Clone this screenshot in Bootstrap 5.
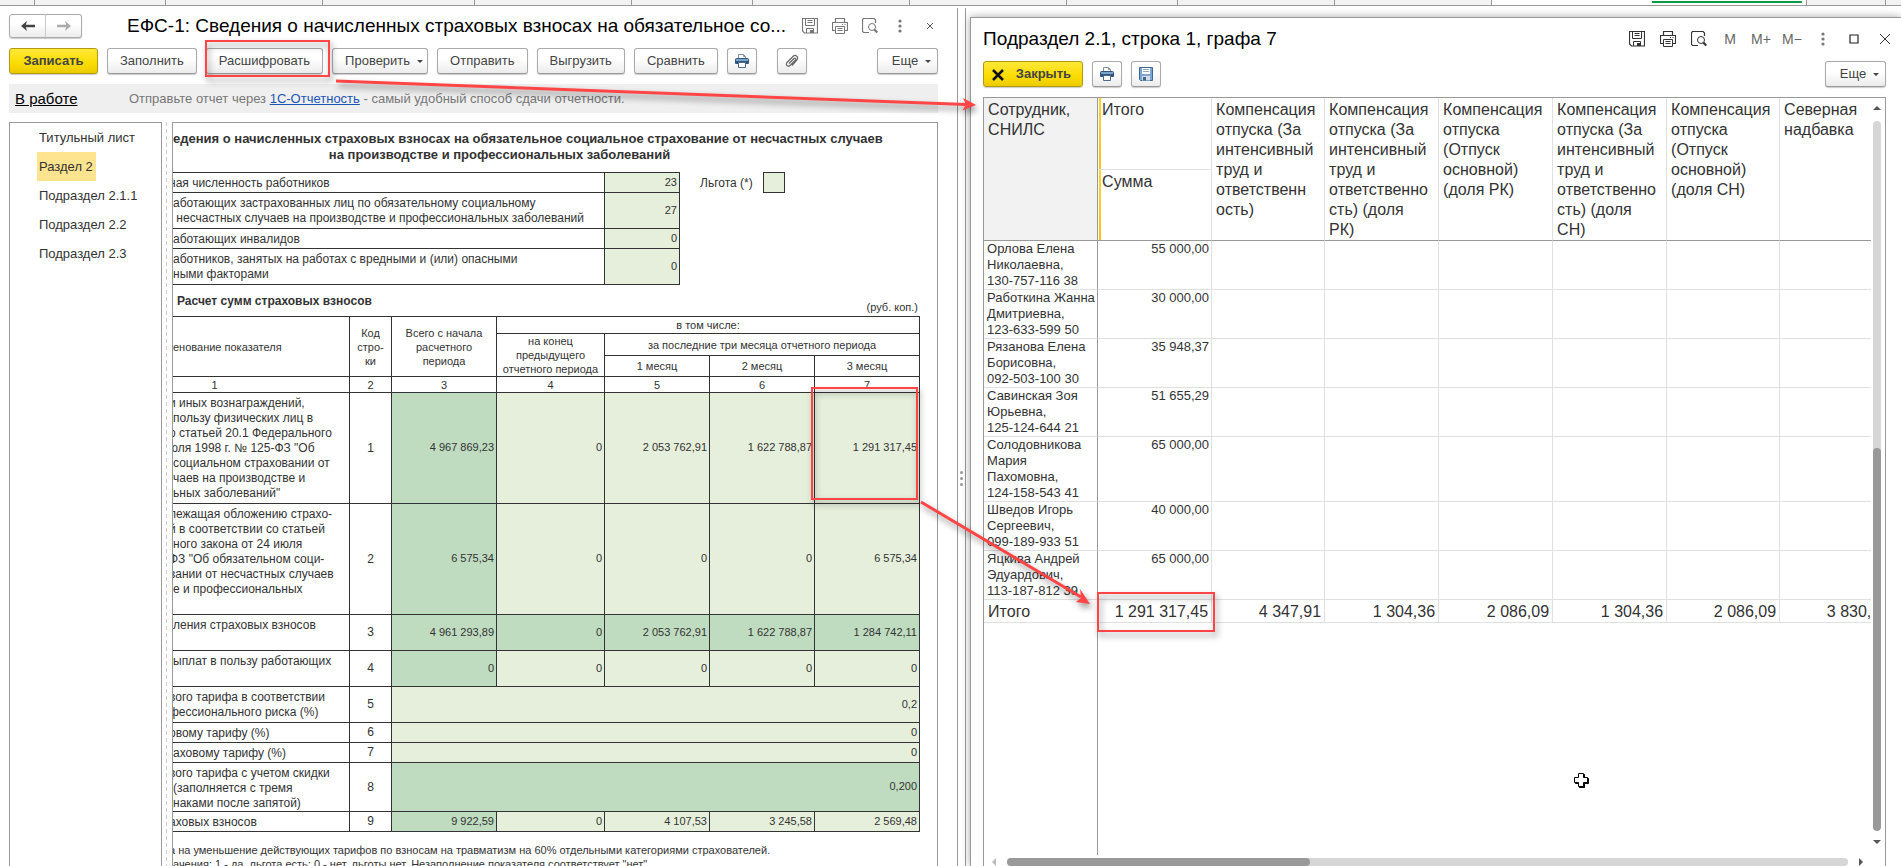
<!DOCTYPE html>
<html lang="ru">
<head>
<meta charset="utf-8">
<meta name="viewport" content="width=device-width, initial-scale=1">
<title>ЕФС-1</title>
<link rel="stylesheet" href="https://cdn.jsdelivr.net/npm/bootstrap@5.3.0/dist/css/bootstrap.min.css">
<style>
body{font-family:"Liberation Sans",Arial,sans-serif;font-size:13px;line-height:16px;color:#333;background:#fff}
.tabstrip{height:6px;border-bottom:1px solid #999;background:#f2f2f2}
.tabstrip>div{border-right:1px solid #999;min-width:0}
.tabstrip>.on{background:#fff;overflow:hidden}
.tabstrip>.on i{display:block;height:2px;background:#0a9f46;margin:1px 1% 0 51%}
.leftpane{flex:0 0 50.4%;padding:7px 20px 0 9px;min-width:0;position:relative}
.leftpane::after{content:"";position:absolute;right:0;top:2px;bottom:0;border-right:1px solid #999}
.splitter{flex:0 0 8px;margin-top:2px;border-right:1px solid #999;color:#999}
.splitter i{width:3px;height:3px;border-radius:50%;background:#999}
.popupwin{margin:11px 0 0 4px;border:1px solid #999;border-width:1px 0 0 1px;padding:8px 15px 0 12px;box-shadow:0 0 8px rgba(0,0,0,.35);background:#fff;min-width:0}
.wintitle{font-size:19px;line-height:26px;color:#000;margin:0;font-weight:400;white-space:nowrap}
.btn.tool{height:26px;min-width:84px;font-size:13px;line-height:16px;padding:4px 12px;color:#444;border:1px solid #aaa;border-bottom-color:#999;border-radius:3px;background:linear-gradient(#fff 40%,#ececec);box-shadow:0 1px 1px rgba(0,0,0,.2);white-space:nowrap}
.btn.tool.main{min-width:89px;font-weight:700;background:linear-gradient(#ffe838,#fadc00 60%,#eccb00);border-color:#b29a10}
.btn.tool.shut{min-width:100px;padding-left:7px;padding-right:10px}
.btn.tool.sq{width:30px;min-width:0;padding:0;display:flex;align-items:center;justify-content:center}
.btn.tool.more{width:61px;min-width:0}
.btn.tool .arr{display:inline-block;border:3px solid transparent;border-top-color:#444;border-bottom:0;margin-left:7px;vertical-align:2px}
.navpair .btn{width:37px;height:24px;padding:0;display:flex;align-items:center;justify-content:center;border:1px solid #aaa;background:linear-gradient(#fff 40%,#ececec);box-shadow:0 1px 1px rgba(0,0,0,.2);border-radius:3px}
.navpair .btn+.btn{border-left-color:#ccc}
.ico{border:0;background:none;padding:0;width:16px;height:16px;display:flex;align-items:center;justify-content:center;color:#777}
.ico.dark{color:#333}
.ico.txt{font-size:14px;color:#666;white-space:nowrap}
.status{height:29px;background:#efefef;padding:0 6px;color:#777}
.status .state{font-size:15px;color:#000;width:114px}
.status .svc{color:#1d55b5}
.sections{width:153px;border:1px solid #999;border-bottom:0;padding:0 27px}
.sections a{display:block;align-self:flex-start;white-space:nowrap;color:#333;text-decoration:none;line-height:29px;padding:0 3px 0 2px}
.sections a.on{background:#ffe48f}
.dash{width:10px;background:repeating-linear-gradient(#ccc 0 4px,transparent 4px 7px) 4px 0/1px 100% no-repeat}
.docframe{border:1px solid #999;border-bottom:0;overflow:hidden;min-width:0}
.sheet{width:747px;color:#333}
.sheet h2{font-size:13px;line-height:16px;font-weight:700;margin:0;padding:8px 0 9px;white-space:nowrap;height:49px}
.sheet h2 span{display:block}
.sheet h2 .second{text-align:center;padding-right:94px}
.form{border-collapse:separate;border-spacing:0;table-layout:fixed;border-top:1px solid #333;font-size:12px;line-height:15px}
.form td,.form th{border:0 solid #333;border-width:0 1px 1px 0;padding:3px 2px 0 0;vertical-align:top;font-weight:400;white-space:nowrap}
.form .v{font-size:11px;line-height:14px;text-align:right;vertical-align:middle;padding:0 2px 2px 0;background:#e6efdc}
.form .g{background:#bfdcc0}
.form .c{text-align:center;vertical-align:middle;padding:0}
.form th{font-size:11px;line-height:14px;text-align:center;vertical-align:middle;padding:0}
.form .one{padding-right:93px}
.half{display:block;text-indent:-4px}
.heavy{font-size:12px;line-height:16px;font-weight:700}
.small11{font-size:11px;line-height:14px}
.lgbox{width:22px;height:21px;border:1px solid #333;background:#e6efdc}
.gridframe{border:1px solid #999;border-bottom:0;overflow:hidden}
.gridwrap{overflow:hidden;min-width:0}
.emp{border-collapse:separate;border-spacing:0;table-layout:fixed;width:909px}
.emp th,.emp td{border:0 solid #e0e0e0;border-width:0 1px 1px 0;padding:0 3px;vertical-align:top;font-weight:400;white-space:nowrap}
.emp tr>:first-child{border-right-color:#999}
.emp thead th{font-size:16px;line-height:20px;padding:2px 4px 0;border-bottom-color:#999}
.emp thead .first{background:#f2f2f2}
.emp thead .tot{background:linear-gradient(#ffd42a,#f5c211) 1px 0/2px 100% no-repeat}
.emp thead .tot.up{border-bottom-color:#e0e0e0}
.emp td+td{text-align:right;padding-right:2px}
.emp tfoot td{font-size:16px;line-height:20px;padding:2px 4px 0;height:23px}
.emp tfoot td+td{padding-right:3px}
.rest{width:115px;border-right:1px solid #999}
.vbar{width:14px;padding:8px 4px 0 2px}
.vbar .track{width:8px;background:#d6d6d6;border-radius:4px;overflow:hidden}
.hbar{height:11px;padding:3px 22px 0 8px}
.hbar .track{height:8px;background:#d6d6d6;border-radius:4px}
.thumb{background:#999;border-radius:4px}
.up3,.dn3,.lf3,.rt3{border:4px solid transparent;width:0;height:0}
.up3{border-bottom-color:#555;border-top:0}
.dn3{border-top-color:#555;border-bottom:0}
.lf3{border-right-color:#bbb;border-left:0}
.rt3{border-left-color:#555;border-right:0}
.marks{position:absolute;left:0;top:0;width:100%;height:100%;pointer-events:none;overflow:visible}
</style>
<script src="https://cdn.jsdelivr.net/npm/bootstrap@5.3.0/dist/js/bootstrap.bundle.min.js"></script>
</head>
<body class="vh-100 overflow-hidden d-flex flex-column position-relative">
<svg width="0" height="0" class="position-absolute">
  <defs>
    <g id="i-save" fill="none" stroke="currentColor"><path d="M.5 .5h15v14.500h-13l-2-2z" stroke-width="1.200"/><path d="M3.500 .5v7h9v-7M5.500 2.500h5M5.500 4.500h5" /><path d="M4.500 15v-4.500h7V15"/><path d="M8 12h3v3H8z" fill="currentColor" stroke="none"/></g>
    <g id="i-print" fill="none" stroke="currentColor"><path d="M3.500 4.500v-4h9v4M3.500 12.500H.5v-8h15v8h-3" stroke-width="1.200"/><path d="M3.500 8.500h9v7h-9zM5.500 10.500h5M5.500 12.500h5M10 6.500h1M12.500 6.500h1"/></g>
    <g id="i-view" fill="none" stroke="currentColor"><path d="M13.500 5V2L12 .5H1.500L.5 1.500v12l1 1H7" stroke-width="1.200"/><circle cx="10" cy="9" r="3.500"/><path d="M12.300 11.500l3 3" stroke-width="2.200"/></g>
    <g id="i-dots" fill="currentColor"><circle cx="8" cy="3" r="1.600"/><circle cx="8" cy="8" r="1.600"/><circle cx="8" cy="13" r="1.600"/></g>
    <g id="i-pclr"><path d="M4.500 5V1.500h5l2 2V5" fill="#fff" stroke="#7c8fa3"/><path d="M9.500 1.500v2h2" fill="none" stroke="#7c8fa3"/><path d="M2.500 5.500h11a1 1 0 0 1 1 1v4h-13v-4a1 1 0 0 1 1-1z" fill="#7ba4cb" stroke="#2f567f"/><path d="M2 8h12v2H2z" fill="#2f567f"/><path d="M4.500 9.500h7v5h-7z" fill="#fff" stroke="#4a6c90"/></g>
    <g id="i-sclr"><path d="M.5 .5h13v13h-12l-1-1z" fill="#7aa7d3" stroke="#3d6791"/><path d="M3 1h8v6H3z" fill="#fff"/><path d="M4 2.500h6M4 4.500h6" stroke="#9ab"/><path d="M3 9h8v4.500H3z" fill="#d8dde2"/><path d="M4 10h3v3.500H4z" fill="#3d6791"/></g>
  </defs>
</svg>

<div class="tabstrip d-flex flex-shrink-0">
  <div style="flex:34 1 0"></div><div style="flex:131 1 0"></div><div style="flex:157 1 0"></div><div style="flex:152 1 0"></div><div style="flex:157 1 0"></div><div style="flex:121 1 0"></div><div style="flex:157 1 0"></div><div style="flex:157 1 0"></div><div style="flex:111 1 0"></div><div style="flex:157 1 0"></div><div style="flex:157 1 0"></div><div class="on" style="flex:316 1 0"><i></i></div><div style="flex:79 1 0"></div><div class="border-0" style="flex:15 1 0"></div>
</div>

<main class="d-flex flex-grow-1 overflow-hidden">
  <section class="leftpane d-flex flex-column">
    <header class="d-flex align-items-center">
      <div class="btn-group navpair">
        <button type="button" class="btn" aria-label="Назад"><svg width="14" height="12"><path d="M14 6H4" stroke="#444" stroke-width="2.500"/><path d="M0 6l6-5-1.500 5L6 11z" fill="#444"/></svg></button>
        <button type="button" class="btn" aria-label="Вперед"><svg width="14" height="12"><path d="M0 6h10" stroke="#aaa" stroke-width="2.500"/><path d="M14 6L8 1l1.500 5L8 11z" fill="#aaa"/></svg></button>
      </div>
      <h1 class="wintitle flex-grow-1" style="margin-left:45px">ЕФС-1: Сведения о начисленных страховых взносах на обязательное со...</h1>
      <div class="d-flex" style="gap:14px">
        <button type="button" class="ico" aria-label="Сохранить"><svg width="16" height="16"><use href="#i-save"/></svg></button>
        <button type="button" class="ico" aria-label="Печать"><svg width="16" height="16"><use href="#i-print"/></svg></button>
        <button type="button" class="ico" aria-label="Просмотр"><svg width="16" height="16"><use href="#i-view"/></svg></button>
        <button type="button" class="ico" aria-label="Меню"><svg width="16" height="16"><use href="#i-dots"/></svg></button>
        <button type="button" class="ico" aria-label="Закрыть окно"><svg width="8" height="8"><path d="M1 1l6 6M7 1L1 7" stroke="#555"/></svg></button>
      </div>
    </header>
    <div class="d-flex" style="gap:9px;margin-top:9px">
      <button type="button" class="btn tool main">Записать</button>
      <button type="button" class="btn tool">Заполнить</button>
      <button type="button" class="btn tool">Расшифровать</button>
      <button type="button" class="btn tool pe-1">Проверить<span class="arr"></span></button>
      <button type="button" class="btn tool">Отправить</button>
      <button type="button" class="btn tool">Выгрузить</button>
      <button type="button" class="btn tool">Сравнить</button>
      <button type="button" class="btn tool sq" aria-label="Печать формы"><svg width="16" height="16"><use href="#i-pclr"/></svg></button>
      <button type="button" class="btn tool sq" style="margin-left:11px" aria-label="Вложения"><svg width="14" height="14" fill="none" stroke="#666" stroke-width="1.200"><path d="M4 9.500l5-5c1-1 2.500.2 1.500 1.500L5 11.500C3.500 13 0 11.500 2 8.500L8 2.500c2.500-2.500 6 .5 4 3.500l-5 5.500"/></svg></button>
      <button type="button" class="btn tool more ms-auto pe-1">Еще<span class="arr"></span></button>
    </div>
    <div class="status d-flex align-items-center flex-shrink-0" style="margin-top:10px">
      <div class="state"><a href="#" class="text-reset">В работе</a></div>
      <div>Отправьте отчет через <a href="#" class="svc">1С-Отчетность</a> - самый удобный способ сдачи отчетности.</div>
    </div>
    <div class="d-flex flex-grow-1 overflow-hidden" style="margin-top:9px">
      <nav class="sections d-flex flex-column flex-shrink-0">
        <a href="#">Титульный лист</a>
        <a href="#" class="on">Раздел 2</a>
        <a href="#">Подраздел 2.1.1</a>
        <a href="#">Подраздел 2.2</a>
        <a href="#">Подраздел 2.3</a>
      </nav>
      <div class="dash flex-shrink-0"></div>
      <div class="docframe flex-grow-1">
        <div class="sheet">
          <h2><span>едения о начисленных страховых взносах на обязательное социальное страхование от несчастных случаев</span><span class="second">на производстве и профессиональных заболеваний</span></h2>
          <div class="d-flex align-items-start">
            <table class="form">
              <colgroup><col style="width:432px"><col style="width:75px"></colgroup>
              <tr style="height:20px"><td><span class="half">ная численность работников</span></td><td class="v">23</td></tr>
              <tr style="height:36px"><td>аботающих застрахованных лиц по обязательному социальному<br>&nbsp;несчастных случаев на производстве и профессиональных заболеваний</td><td class="v">27</td></tr>
              <tr style="height:20px"><td>аботающих инвалидов</td><td class="v">0</td></tr>
              <tr style="height:36px"><td>аботников, занятых на работах с вредными и (или) опасными<br>ными факторами</td><td class="v">0</td></tr>
            </table>
            <div class="d-flex align-items-center" style="margin-left:20px;gap:10px;font-size:12px">Льгота (*)<span class="lgbox"></span></div>
          </div>
          <div class="d-flex justify-content-between" style="height:31px;padding:8px 2px 2px 4px">
            <span class="heavy">Расчет сумм страховых взносов</span><span class="small11 align-self-end">(руб. коп.)</span>
          </div>
          <table class="form">
            <colgroup><col style="width:177px"><col style="width:42px"><col style="width:105px"><col style="width:108px"><col style="width:105px"><col style="width:105px"><col style="width:105px"></colgroup>
            <thead>
              <tr style="height:17px"><th rowspan="3" class="text-start">енование показателя</th><th rowspan="3">Код<br>стро-<br>ки</th><th rowspan="3">Всего с начала<br>расчетного<br>периода</th><th colspan="4">в том числе:</th></tr>
              <tr style="height:22px"><th rowspan="2">на конец<br>предыдущего<br>отчетного периода</th><th colspan="3">за последние три месяца отчетного периода</th></tr>
              <tr style="height:21px"><th>1 месяц</th><th>2 месяц</th><th>3 месяц</th></tr>
              <tr style="height:16px"><th class="one">1</th><th>2</th><th>3</th><th>4</th><th>5</th><th>6</th><th>7</th></tr>
            </thead>
            <tbody>
              <tr style="height:111px"><td><span class="half">и иных вознаграждений,</span>пользу физических лиц в<span class="half">о статьей 20.1 Федерального</span><span class="half">юля 1998 г. № 125-ФЗ "Об</span>социальном страховании от<br>чаев на производстве и<br>ьных заболеваний"</td><td class="c">1</td><td class="v g">4 967 869,23</td><td class="v">0</td><td class="v">2 053 762,91</td><td class="v">1 622 788,87</td><td class="v">1 291 317,45</td></tr>
              <tr style="height:111px"><td><span class="half">лежащая обложению страхо-</span><span class="half">й в соответствии со статьей</span>ного закона от 24 июля<span class="half">ФЗ "Об обязательном соци-</span><span class="half">вании от несчастных случаев</span>е и профессиональных</td><td class="c">2</td><td class="v g">6 575,34</td><td class="v">0</td><td class="v">0</td><td class="v">0</td><td class="v">6 575,34</td></tr>
              <tr style="height:36px"><td>ления страховых взносов</td><td class="c">3</td><td class="v g">4 961 293,89</td><td class="v g">0</td><td class="v g">2 053 762,91</td><td class="v g">1 622 788,87</td><td class="v g">1 284 742,11</td></tr>
              <tr style="height:36px"><td>ыплат в пользу работающих</td><td class="c">4</td><td class="v g">0</td><td class="v">0</td><td class="v">0</td><td class="v">0</td><td class="v">0</td></tr>
              <tr style="height:36px"><td><span class="half">вого тарифа в соответствии</span><span class="half">фессионального риска (%)</span></td><td class="c">5</td><td class="v" colspan="5">0,2</td></tr>
              <tr style="height:20px"><td><span class="half">овому тарифу (%)</span></td><td class="c">6</td><td class="v" colspan="5">0</td></tr>
              <tr style="height:20px"><td>аховому тарифу (%)</td><td class="c">7</td><td class="v" colspan="5">0</td></tr>
              <tr style="height:49px"><td><span class="half">вого тарифа с учетом скидки</span>(заполняется с тремя<br>наками после запятой)</td><td class="c">8</td><td class="v g" colspan="5">0,200</td></tr>
              <tr style="height:20px"><td><span class="half">аховых взносов</span></td><td class="c">9</td><td class="v g">9 922,59</td><td class="v">0</td><td class="v">4 107,53</td><td class="v">3 245,58</td><td class="v">2 569,48</td></tr>
            </tbody>
          </table>
          <div class="small11 text-nowrap" style="padding-top:11px"><span class="half">а на уменьшение действующих тарифов по взносам на травматизм на 60% отдельными категориями страхователей.</span>ачения: 1 - да, льгота есть; 0 - нет, льготы нет. Незаполнение показателя соответствует "нет"</div>
        </div>
      </div>
    </div>
  </section>

  <div class="splitter d-flex flex-column align-items-center justify-content-center">
    <div class="d-flex flex-column" style="gap:3px;margin-top:82px"><i></i><i></i><i></i></div>
  </div>

  <section class="popupwin flex-grow-1 d-flex flex-column">
    <header class="d-flex align-items-center">
      <h1 class="wintitle flex-grow-1">Подраздел 2.1, строка 1, графа 7</h1>
      <div class="d-flex" style="gap:15px;margin-right:-7px">
        <button type="button" class="ico dark" aria-label="Сохранить"><svg width="16" height="16"><use href="#i-save"/></svg></button>
        <button type="button" class="ico dark" aria-label="Печать"><svg width="16" height="16"><use href="#i-print"/></svg></button>
        <button type="button" class="ico dark" aria-label="Просмотр"><svg width="16" height="16"><use href="#i-view"/></svg></button>
        <button type="button" class="ico txt">M</button>
        <button type="button" class="ico txt">M+</button>
        <button type="button" class="ico txt">M−</button>
        <button type="button" class="ico" aria-label="Меню"><svg width="16" height="16"><use href="#i-dots"/></svg></button>
        <button type="button" class="ico dark" aria-label="Развернуть"><svg width="10" height="10"><path d="M1 1h8v8H1z" fill="none" stroke="#222" stroke-width="1.200"/></svg></button>
        <button type="button" class="ico dark" aria-label="Закрыть окно"><svg width="10" height="10"><path d="M0 0l10 10M10 0L0 10" stroke="#333"/></svg></button>
      </div>
    </header>
    <div class="d-flex" style="gap:9px;margin-top:9px">
      <button type="button" class="btn tool main shut"><svg width="12" height="12" class="me-2"><path d="M1 1l10 10M11 1L1 11" stroke="#111" stroke-width="2.500"/></svg> Закрыть</button>
      <button type="button" class="btn tool sq" aria-label="Печать"><svg width="16" height="16"><use href="#i-pclr"/></svg></button>
      <button type="button" class="btn tool sq" aria-label="Сохранить"><svg width="14" height="14"><use href="#i-sclr"/></svg></button>
      <button type="button" class="btn tool more ms-auto pe-1">Еще<span class="arr"></span></button>
    </div>
    <div class="gridframe d-flex flex-column flex-grow-1" style="margin-top:10px">
      <div class="d-flex flex-grow-1 overflow-hidden">
        <div class="gridwrap flex-grow-1 d-flex flex-column">
          <table class="emp">
            <colgroup><col style="width:114px"><col style="width:114px"><col style="width:113px"><col style="width:114px"><col style="width:114px"><col style="width:114px"><col style="width:113px"><col style="width:113px"></colgroup>
            <thead>
              <tr style="height:72px"><th rowspan="2" class="first">Сотрудник,<br>СНИЛС</th><th class="tot up">Итого</th><th rowspan="2">Компенсация<br>отпуска (За<br>интенсивный<br>труд и<br>ответственн<br>ость)</th><th rowspan="2">Компенсация<br>отпуска (За<br>интенсивный<br>труд и<br>ответственно<br>сть) (доля<br>РК)</th><th rowspan="2">Компенсация<br>отпуска<br>(Отпуск<br>основной)<br>(доля РК)</th><th rowspan="2">Компенсация<br>отпуска (За<br>интенсивный<br>труд и<br>ответственно<br>сть) (доля<br>СН)</th><th rowspan="2">Компенсация<br>отпуска<br>(Отпуск<br>основной)<br>(доля СН)</th><th rowspan="2">Северная<br>надбавка</th></tr>
              <tr style="height:71px"><th class="tot" style="border-right-color:#e0e0e0">Сумма</th></tr>
            </thead>
            <tbody>
              <tr><td>Орлова Елена<br>Николаевна,<br>130-757-116 38</td><td>55 000,00</td><td></td><td></td><td></td><td></td><td></td><td></td></tr>
              <tr><td>Работкина Жанна<br>Дмитриевна,<br>123-633-599 50</td><td>30 000,00</td><td></td><td></td><td></td><td></td><td></td><td></td></tr>
              <tr><td>Рязанова Елена<br>Борисовна,<br>092-503-100 30</td><td>35 948,37</td><td></td><td></td><td></td><td></td><td></td><td></td></tr>
              <tr><td>Савинская Зоя<br>Юрьевна,<br>125-124-644 21</td><td>51 655,29</td><td></td><td></td><td></td><td></td><td></td><td></td></tr>
              <tr><td>Солодовникова<br>Мария<br>Пахомовна,<br>124-158-543 41</td><td>65 000,00</td><td></td><td></td><td></td><td></td><td></td><td></td></tr>
              <tr><td>Шведов Игорь<br>Сергеевич,<br>099-189-933 51</td><td>40 000,00</td><td></td><td></td><td></td><td></td><td></td><td></td></tr>
              <tr><td>Яцкива Андрей<br>Эдуардович,<br>113-187-812 39</td><td>65 000,00</td><td></td><td></td><td></td><td></td><td></td><td></td></tr>
            </tbody>
            <tfoot>
              <tr><td>Итого</td><td>1 291 317,45</td><td>4 347,91</td><td>1 304,36</td><td>2 086,09</td><td>1 304,36</td><td>2 086,09</td><td>3 830,43</td></tr>
            </tfoot>
          </table>
          <div class="rest flex-grow-1" style="width:114px"></div>
        </div>
        <div class="vbar flex-shrink-0 d-flex flex-column align-items-center">
          <span class="up3"></span>
          <div class="track flex-grow-1 d-flex flex-column justify-content-end" style="margin:11px 0 9px"><div class="thumb" style="height:54%"></div></div>
          <span class="dn3" style="margin-bottom:11px"></span>
        </div>
      </div>
      <div class="hbar d-flex align-items-center flex-shrink-0">
        <span class="lf3"></span>
        <div class="track flex-grow-1" style="margin:0 11px"><div class="thumb h-100" style="width:36%"></div></div>
        <span class="rt3"></span>
      </div>
    </div>
  </section>
</main>

<!-- callout frames, arrows and the cell cursor -->
<svg class="marks" style="filter:drop-shadow(2px 4px 3px rgba(0,0,0,.45))" fill="none" stroke="#ff4545">
  <path d="M206 41h123v35H206zM812 388h105v111H812zM1098 593h116v38H1098z" stroke-width="2"/>
  <path d="M336 81L966 104.500M921 502l160 95" stroke-width="3"/>
  <path d="M976 105l-13-7 3 6.500-3.500 6zM1090 604l-14-2 5-4-1-9z" fill="#ff4545" stroke="none"/>
</svg>
<svg class="marks" stroke="#000"><path d="M1579.500 774.500h5v4h4v5h-4v4h-5v-4h-4v-5h4z" fill="#000"/><path d="M1578.500 773.500h5v4h4v5h-4v4h-5v-4h-4v-5h4z" fill="#fff"/></svg>
</body>
</html>
